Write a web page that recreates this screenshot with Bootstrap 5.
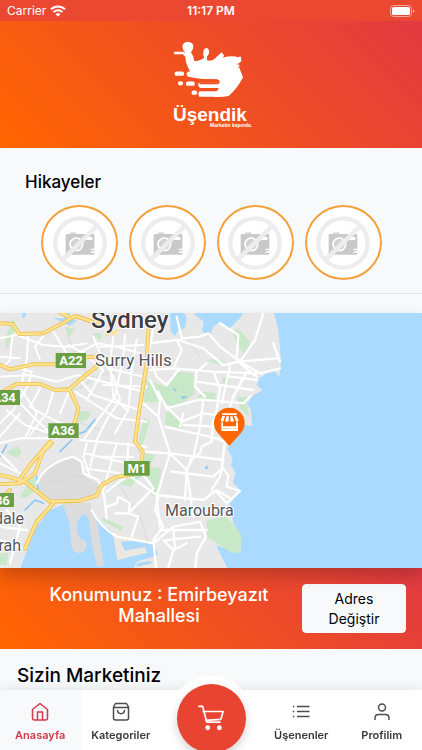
<!DOCTYPE html>
<html lang="tr">
<head>
<meta charset="utf-8">
<meta name="viewport" content="width=device-width, initial-scale=1">
<title>Üşendik</title>
<link href="https://cdn.jsdelivr.net/npm/bootstrap@5.3.0/dist/css/bootstrap.min.css" rel="stylesheet">
<style>
  :root { --brand-grad: linear-gradient(45deg, #ff6600, #e13a42); }
  body { font-family: Inter, "Open Sans", sans-serif; background: #f8f9fb; color: #000; padding-bottom: 60px; }
  svg { display: block; }
  .status-bar { background: #eb4832; height: 21px; padding: 0 7px; font-size: 12px; line-height: 21px; }
  .brand-head { background: var(--brand-grad); height: 127px; padding-top: 9px; }
  .logo-name { font: 700 19px "Liberation Sans", sans-serif; }
  .logo-tag { font: 700 5px "Liberation Sans", sans-serif; }
  .stories { border-bottom: 1px solid #e2e3e5; padding: 23px 0 13px; margin-bottom: 19px; }
  .stories h1 { font-size: 17px; line-height: 22px; padding-left: 25px; margin-bottom: 12px; }
  .story-row { padding: 0 35px 0 36px; }
  .story { width: 77px; height: 75px; border: 2px solid #f4a03f; border-radius: 50%; background: #fff; }
  .map-box { box-shadow: 0 8px 16px rgba(0, 0, 0, .2); height: 255px; z-index: 1; }
  .map-box text { font-family: Roboto, sans-serif; }
  .place { fill: #52565b; stroke: #fff; stroke-width: 2px; paint-order: stroke; font-size: 16px; }
  .suburb { font-size: 17px; }
  .city { fill: #3c4043; font-size: 24px; font-weight: 500; }
  .shield { fill: #fff; font-size: 13px; font-weight: 700; text-anchor: middle; }
  .location-bar { background: var(--brand-grad); padding: 16px; height: 81px; }
  .location-text { font-size: 18px; line-height: 21px; font-weight: 500; }
  .address-btn { width: 104px; height: 49px; font-size: 14px; line-height: 20px; padding: 4px 16px; border-radius: 4px; flex: none; }
  .market-title { font-size: 19px; line-height: 24px; padding: 15px 17px 0; margin: 0; }
  .tab-bar { background: #fff; height: 60px; box-shadow: 0 0 12px rgba(0, 0, 0, .1); }
  .tab-item { color: #343a40; font-size: 11px; line-height: 16px; font-weight: 600; padding-top: 12px; gap: 5px; flex: 1 1 0; }
  .tab-item.current { color: #d03a4b; background: #f8f9fb; }
  .cart-slot { width: 100px; }
  .cart-ring { width: 84px; height: 84px; margin-top: -14px; background: #fff; }
  .cart-btn { width: 69px; height: 69px; border: 0; background: #e94331; box-shadow: 0 4px 10px rgba(0, 0, 0, .18); }
</style>
<script src="https://cdn.jsdelivr.net/npm/bootstrap@5.3.0/dist/js/bootstrap.bundle.min.js"></script>
</head>
<body>
<svg width="0" height="0" class="position-absolute" aria-hidden="true">
  <symbol id="no-photo" viewBox="0 0 162 162">
    <rect x="51" y="49" width="18" height="7" fill="#d8d8d8"/>
    <rect x="38" y="54" width="86" height="62" rx="3" fill="#c9c9c9"/>
    <rect x="98" y="63" width="20" height="9" fill="#fff"/>
    <path d="M113 100h12M113 108h12" stroke="#fff" stroke-width="4"/>
    <circle cx="70" cy="85" r="19" fill="#d2d2d2" stroke="#fff" stroke-width="5"/>
    <path d="M28 132L130 32" stroke="#ededed" stroke-width="14"/>
    <circle cx="81" cy="81" r="74" fill="none" stroke="#ededed" stroke-width="13"/>
  </symbol>
</svg>

<div class="status-bar d-flex align-items-center text-white">
  <div class="d-flex align-items-center gap-1 w-50">
    <span>Carrier</span>
    <svg width="16" height="12" viewBox="0 0 16 12" fill="none" stroke="#fff" stroke-width="2"><path d="M1 4.4a10 10 0 0 1 14 0M3.6 7.1a6.3 6.3 0 0 1 8.8 0"/><path d="M8 11.6L5.6 9.2a3.4 3.4 0 0 1 4.8 0z" fill="#fff" stroke="none"/></svg>
  </div>
  <span class="fw-semibold text-nowrap">11:17 PM</span>
  <div class="w-50 d-flex justify-content-end">
    <svg width="25" height="12" viewBox="0 0 25 12"><rect x=".5" y=".5" width="21" height="11" rx="3" fill="none" stroke="#f6a59a"/><rect x="2" y="2" width="18" height="8" rx="1.5" fill="#fff"/><path d="M23 4v4q1.500-.5 1.500-2T23 4z" fill="#f6a59a"/></svg>
  </div>
</div>

<header class="brand-head d-flex justify-content-center">
  <svg width="102" height="110" viewBox="0 0 102 110" fill="#fff" role="img" aria-label="Üşendik">
    <g transform="scale(.33333)">
      <path d="M45 69H69L81 80" fill="none" stroke="#fff" stroke-width="7" stroke-linecap="round"/>
      <path d="M70 60Q61 38 82 35Q101 37 100 50Q99 60 93 67Q101 78 103 93Q116 94 133 83Q128 74 130 65Q132 54 140 54Q149 57 147 69Q145 76 141 80L141 91Q155 94 163 87L185 67L193 77L188 83Q215 75 235 82Q241 77 243 82L244 94L237 100L239 116L249 142Q232 176 206 198Q180 203 160 200H118Q112 192 118 184H168Q176 181 176 174H120Q112 166 116 158H172Q180 154 172 149L120 146L84 140Q77 133 82 126L90 124Q76 100 76 78Q78 70 70 60Z"/>
      <path d="M50 131H66M60 160H63M84 161H98M101 188H105" stroke="#fff" stroke-width="13" stroke-linecap="round"/>
      <path d="M104 150H171Q181 154 174 160H118M124 177H171" fill="none" stroke="#f1511f" stroke-width="5"/>
      <path d="M232 103L243 99M235 113L244 108" stroke="#f1511f" stroke-width="3"/>
    </g>
    <text class="logo-name" x="13" y="91">Üşendik</text>
    <text class="logo-tag" x="50" y="97">Marketin kapında.</text>
  </svg>
</header>

<section class="stories">
  <h1 class="fw-medium">Hikayeler</h1>
  <div class="story-row row g-0">
    <div class="col-3 d-flex justify-content-center"><a href="#" class="story d-flex align-items-center justify-content-center" aria-label="Hikaye 1"><svg width="54" height="54"><use href="#no-photo"/></svg></a></div>
    <div class="col-3 d-flex justify-content-center"><a href="#" class="story d-flex align-items-center justify-content-center" aria-label="Hikaye 2"><svg width="54" height="54"><use href="#no-photo"/></svg></a></div>
    <div class="col-3 d-flex justify-content-center"><a href="#" class="story d-flex align-items-center justify-content-center" aria-label="Hikaye 3"><svg width="54" height="54"><use href="#no-photo"/></svg></a></div>
    <div class="col-3 d-flex justify-content-center"><a href="#" class="story d-flex align-items-center justify-content-center" aria-label="Hikaye 4"><svg width="54" height="54"><use href="#no-photo"/></svg></a></div>
  </div>
</section>

<section class="map-box position-relative">
  <svg width="100%" height="255" viewBox="0 0 422 255" preserveAspectRatio="xMidYMid slice">
    <g transform="translate(0 -3) scale(.33333)" stroke-linejoin="round" stroke-linecap="round" fill="none">
      <rect width="1266" height="790" fill="#aadaff"/>
      <path fill="#e8e8e8" d="M0 0H820L835 60L843 150L838 200L825 185L800 190L778 205L770 225L788 240L755 260L742 280L752 300L757 348L735 345L715 370L690 408L680 415L698 445L693 465L707 490L698 515L722 543L690 580L700 640L722 680V730L645 705L665 745L688 790H0Z"/>
      <!-- harbour -->
      <path fill="#aadaff" d="M65 0H215L205 22L230 32L210 48L185 36L160 25L190 15L150 10L90 15L68 25ZM510 0H550L560 25L555 55L535 60L525 78L512 65ZM580 0H735L720 25L690 55L655 38L640 50L628 78L605 62L612 35L585 15ZM38 40L60 60L35 62L20 30Z"/>
      <path fill="#e8e8e8" d="M80 0H210L190 25H150L120 60L55 65L75 30Z"/>
      <!-- bay and piers -->
      <path fill="#aadaff" d="M55 790L85 710L110 650L150 600L190 583L270 585L295 630L345 672L410 693L462 698L475 735L410 755L395 790Z"/>
      <path fill="#dcdcdc" d="M186 575L208 640L215 710Q222 733 245 728Q264 718 258 692Q232 690 230 650Q232 618 258 612L266 630L275 700L292 771L312 766L295 660L285 610L270 580Z"/>
      <path fill="#ebe8e1" d="M338 668L352 750L442 728L434 712L375 722L362 695L405 692L460 700L475 735L410 760L400 790H640L560 720L460 690Z"/>
      <path fill="#e8e8e8" d="M460 690L475 735L480 790H690L640 690Z"/>
      <path fill="#aadaff" d="M410 760L450 752L458 760L410 771Z"/>
      <!-- airport -->
      <path fill="#dcdcdc" d="M118 520L125 495L150 462L220 440L245 455L255 500L295 520L300 545L240 570L160 575L118 545Z"/>
      <path stroke="#cfd2d8" stroke-width="2" d="M130 510L190 518L230 495L255 500M340 500L420 620L445 700M200 75L270 210L220 245L330 180M275 200L345 190M560 80L600 140M230 335L300 360M95 365L150 350M385 715L460 705"/>
      <!-- parks -->
      <g fill="#c8e8c8">
        <path d="M535 185L580 190L585 250L550 280L520 290L480 275L430 278L440 210L500 230ZM498 310L520 300L545 335V358L495 345ZM695 65L715 55L750 95L738 138L715 110ZM620 150L650 147L685 160L650 163ZM605 245L645 248L648 270L590 268ZM668 203L690 205L685 222L666 220ZM710 260L745 260L742 285L748 322L720 295ZM620 630L680 620L722 670V730L690 725L620 680Z"/>
        <path d="M195 50L225 58L205 85ZM235 303L273 305L262 330L235 338ZM432 325L450 330L428 405L412 400ZM435 430L465 435L450 470L485 475L478 520L465 560L445 545L455 515L430 495L390 530L350 520L400 500L430 490ZM85 500L105 500L108 540L75 565L60 560L80 530ZM20 425L55 408L65 430L50 443L30 435ZM40 20L48 50L20 120L15 90ZM0 730L25 728L20 765H0ZM305 620L370 650L365 662L310 635ZM275 70L305 70L300 92ZM520 600L560 595L540 608Z"/>
      </g>
      <path fill="#8cc6f6" d="M516 234L530 238L528 245ZM540 258L562 260L550 268ZM613 476L622 464L623 478Z"/>
      <path stroke="#8cc6f6" stroke-width="5" d="M285 328L255 365L240 370M215 390L180 425M20 405L0 440M75 600L105 570L130 580M110 500L115 545"/>
      <!-- local streets -->
      <path stroke="#fff" stroke-width="6" d="M0 85L50 75L130 105L200 110L260 100M38 75L30 150L10 170M85 75L80 150L65 220M130 78L105 110L120 150M0 140L60 145M160 65L200 130M205 105L250 130M245 125L290 100L350 110L420 130M0 200L90 195L170 215L235 195L310 215L430 245M60 175L95 185L85 225L40 300L0 340M0 245L50 270L130 350L170 385M65 240L110 310L75 385M120 235L90 290L160 330L210 350M160 245L140 310L90 375M0 380L60 310M0 400L60 385L145 385M20 300L75 345L150 370M210 240L180 310M240 210L280 255L420 300M225 245L350 325L440 335M250 130L310 180L260 270M280 80L300 130L340 200L360 270L320 330L290 390M340 80L330 160L340 260L380 300M375 75L370 140L345 260L250 390M410 90L395 180L385 300L345 370M300 110L430 105M325 175L430 200M310 225L440 230M240 390L350 400L440 410M260 400L250 440L270 500M290 395L270 470M350 400L310 540M385 400L380 490M255 430L380 460M250 475L360 490M300 440L400 440M0 460L60 490M0 430L50 480"/>
      <path stroke="#fff" stroke-width="7" d="M110 520Q135 460 220 440L245 455L250 490L295 510L312 555L320 625M275 600Q300 650 350 680L460 700L520 650L600 635L618 680L590 730L585 790M320 545L385 495L470 555L610 570L650 540L690 565M320 590L350 580L355 560L390 580L385 610L415 620L395 680M345 610L385 610L460 535L430 495M445 100L530 90L545 120L520 175L640 185L770 190M460 55L445 130L470 200L500 225L535 180M450 180L520 175M450 210L480 270L475 320L510 430L560 480L580 620M475 320L430 280M475 245L500 295L600 268L730 280L752 258M500 290L545 335L610 310L650 315M550 345L640 350M610 268L600 350L580 440L560 480L555 570M495 350L650 385L675 395L665 470L685 495L680 530L720 543L680 580L650 545M640 330L635 395L605 410L600 430L570 450M435 425L510 430L670 450M510 430L470 560L480 650M515 485L640 500L665 475M670 450L660 500L635 540M475 560L465 600L490 650L460 690L470 790M500 690L600 680M480 660L620 660M490 690L520 720L500 790M520 720L560 700M520 650L525 720"/>
      <path stroke="#fff" stroke-width="7" d="M535 90L610 115L670 165L720 155L830 145M530 20L545 85L600 80L625 70L660 110L720 155L765 90L790 10M660 40L715 75L710 145M720 155L780 190L840 175M685 165L720 150M590 185L585 230L615 260M640 185L660 235L650 300L640 350M690 170L665 280M740 185L700 260L690 290M720 160L770 200M590 215L760 240M690 200L770 210M820 100L840 155M620 160L590 185M540 350L550 310M0 650L80 660M20 600L60 650L30 760M0 690L70 715"/>
      <!-- highways: casing, then fill -->
      <path stroke="#efc04a" stroke-width="12" d="M0 40L38 42L58 72L130 70L190 38L225 18L300 42M175 5L205 20M0 165L30 178L100 163H170M255 142L285 140M0 250L50 222L120 222L165 240L208 238L245 205L290 170M208 238L235 295L225 335L205 365M150 395L90 465L55 515M155 400L128 425L105 490L60 520L0 522M0 495L70 512L150 575L240 572L290 557L305 525L350 500L395 495L425 465L428 425L405 395L415 320L440 160L445 60M30 540L0 570M160 580L110 635L75 715"/>
      <path stroke="#ffe391" stroke-width="7" d="M0 40L38 42L58 72L130 70L190 38L225 18L300 42M175 5L205 20M0 165L30 178L100 163H170M255 142L285 140M0 250L50 222L120 222L165 240L208 238L245 205L290 170M208 238L235 295L225 335L205 365M150 395L90 465L55 515M155 400L128 425L105 490L60 520L0 522M0 495L70 512L150 575L240 572L290 557L305 525L350 500L395 495L425 465L428 425L405 395L415 320L440 160L445 60M30 540L0 570M160 580L110 635L75 715"/>
      <path stroke="#ffe391" stroke-width="7" d="M320 75L355 60M330 60L345 75"/>
      <g fill="#6a9f45"><path d="M167 129H258V174H167ZM-20 240H60V285H-20ZM145 340H236V384H145ZM372 453H449V497H372ZM-30 549H42V591H-30Z"/></g>
      <!-- shop pin -->
      <path fill="#ff6600" d="M688 408L654 370A46 46 0 1 1 722 370Z"/>
      <path fill="#fff" d="M666 310H710V315H666ZM667 318H675L671 333Q665 338 662 331ZM680 318H686V333Q680 338 675 333ZM691 318H697L702 333Q696 338 691 333ZM702 318H709L716 331Q712 338 707 333ZM664 337H669V349H708V337H714V363H664Z"/>
      <path stroke="#ffb27c" stroke-width="2" d="M669 356H690M702 356H707"/>
    </g>
    <text class="place city" x="91" y="15">Sydney</text>
    <text class="place suburb" x="95" y="53">Surry Hills</text>
    <text class="place" x="165" y="203">Maroubra</text>
    <text class="place" x="24" y="211" text-anchor="end">dale</text>
    <text class="place" x="21" y="238" text-anchor="end">rah</text>
    <text class="shield" x="71" y="52">A22</text>
    <text class="shield" x="4" y="89">A34</text>
    <text class="shield" x="63" y="122">A36</text>
    <text class="shield" x="137" y="160">M1</text>
    <text class="shield" x="-2" y="192">A36</text>
  </svg>
</section>

<section class="location-bar d-flex text-white">
  <div class="location-text flex-fill text-center px-4">Konumunuz : Emirbeyazıt Mahallesi</div>
  <button type="button" class="btn btn-light address-btn">Adres Değiştir</button>
</section>

<h2 class="market-title fw-medium">Sizin Marketiniz</h2>

<nav class="tab-bar fixed-bottom d-flex">
  <a href="#" class="tab-item current d-flex flex-column align-items-center text-decoration-none" aria-current="page">
    <svg width="18" height="20" viewBox="0 0 18 20" fill="none" stroke="currentColor" stroke-width="1.500" stroke-linejoin="round"><path d="M1.500 7.500L9 1.500l7.500 6V16q0 2-2 2h-11q-2 0-2-2zM6.500 18V10h5v8"/></svg>
    Anasayfa
  </a>
  <a href="#" class="tab-item d-flex flex-column align-items-center text-decoration-none">
    <svg width="18" height="20" viewBox="0 0 18 20" fill="none" stroke="#4d4d4d" stroke-width="1.500" stroke-linejoin="round" stroke-linecap="round"><path d="M3.500 1.500h11L16.500 5v11q0 2-2 2h-11q-2 0-2-2V5zM1.500 5.500h15M5.500 8.500q.5 3.200 3.500 3.200t3.500-3.200"/></svg>
    Kategoriler
  </a>
  <div class="cart-slot d-flex justify-content-center">
    <div class="cart-ring rounded-circle d-flex align-items-center justify-content-center flex-shrink-0">
      <button type="button" class="cart-btn rounded-circle d-flex align-items-center justify-content-center p-0" aria-label="Sepet">
        <svg width="28" height="28" viewBox="0 0 30 30" fill="none" stroke="#fff" stroke-width="1.800" stroke-linejoin="round" stroke-linecap="round"><path d="M2 2.500h4l4.500 17H24.500M6.800 8H28l-2.500 8.500L9.500 17.500"/><circle cx="11.500" cy="25.500" r="1.700" fill="#fff"/><circle cx="24" cy="25.500" r="1.700" fill="#fff"/></svg>
      </button>
    </div>
  </div>
  <a href="#" class="tab-item d-flex flex-column align-items-center text-decoration-none">
    <svg width="18" height="20" viewBox="0 0 18 20" fill="none" stroke="#4d4d4d" stroke-width="1.400"><path d="M5 4.500h12.500M5 9.500h12.500M5 14.500h12.500M.8 4.500h1.500M.8 9.500h1.500M.8 14.500h1.500"/></svg>
    Üşenenler
  </a>
  <a href="#" class="tab-item d-flex flex-column align-items-center text-decoration-none">
    <svg width="18" height="20" viewBox="0 0 18 20" fill="none" stroke="#4d4d4d" stroke-width="1.500" stroke-linecap="round"><circle cx="9" cy="5.500" r="3.500"/><path d="M2 17.500V16q0-3.500 3.500-3.500h7q3.500 0 3.500 3.500v1.500"/></svg>
    Profilim
  </a>
</nav>
</body>
</html>
